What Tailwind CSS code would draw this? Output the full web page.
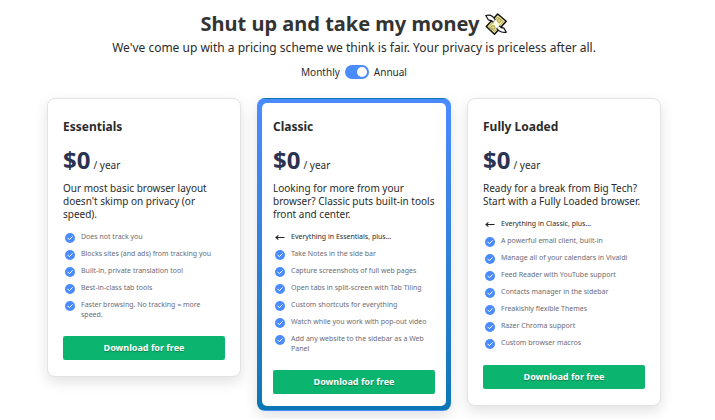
<!DOCTYPE html>
<html lang="en">
<head>
  <meta charset="UTF-8" />
  <meta name="viewport" content="width=device-width, initial-scale=1" />
  <title>Pricing</title>
  <script src="https://cdn.jsdelivr.net/npm/@tailwindcss/browser@4"></script>
</head>
<body class="bg-white font-['Noto_Sans','Open_Sans',sans-serif] text-[#2b2b2b]">
  <!-- shared icons -->
  <svg class="hidden">
    <symbol id="check" viewBox="0 0 10 10">
      <circle cx="5" cy="5" r="5" fill="#4a8cff" />
      <path d="M2.8 5.1 4.4 6.7 7.3 3.7" fill="none" stroke="#fff" stroke-width="1" stroke-linecap="round" stroke-linejoin="round" />
    </symbol>
    <symbol id="arrow" viewBox="0 0 10 10">
      <path d="M1 4.500H9.500M3.400 2.400 1 4.500 3.400 6.600" fill="none" stroke="#222" stroke-width="1.1" />
    </symbol>
  </svg>

  <main class="pt-2 pb-2 pl-[47px] pr-[54px]">
    <header class="flex flex-col items-center">
      <h1 class="flex items-center gap-[6px] text-[20px] leading-8 font-bold text-[#333]">
        Shut up and take my money
        <svg class="size-[22px]" viewBox="0 0 22 22" stroke-linejoin="round" aria-hidden="true">
          <path d="M1.300 13.500 12.700 1l8.500 7.300L9.500 21.200z" fill="#f3ea9c" stroke="#111" stroke-width="1.5" />
          <path d="M4 13.700 12.800 4l5.500 4.600L9.500 18.400z" fill="none" stroke="#8f8745" stroke-width=".7" />
          <circle cx="14" cy="7.500" r="1.900" fill="#e3d77c" stroke="#8f8745" stroke-width=".7" />
          <circle cx="8" cy="14.500" r="1.900" fill="#e3d77c" stroke="#8f8745" stroke-width=".7" />
          <path d="M8.500 9.500C7.500 7.500 5 7 3.300 6.800L.8 2.500C4.500 1.600 8.500 3 10.500 7.500z" fill="#fff" stroke="#111" stroke-width="1.200" />
          <path d="M14 12.500C15 14.500 17.500 15 19 15.200l2.300 4C18 20 13.500 18.500 11.500 15z" fill="#fff" stroke="#111" stroke-width="1.200" />
          <path d="m8 9.200 2.800-2.700 4 6.300-3.200 3z" fill="#fbfaf0" />
        </svg>
      </h1>
      <p class="text-[12px] leading-4">We've come up with a pricing scheme we think is fair. Your privacy is priceless after all.</p>
      <label class="mt-2 flex items-center gap-[5px] text-[10px] leading-4">
        Monthly
        <input type="checkbox" checked class="peer sr-only" />
        <span class="flex h-[14px] w-6 items-center rounded-full bg-gray-400 p-[2px] peer-checked:justify-end peer-checked:bg-[#4a8cff]">
          <span class="size-[10px] rounded-full bg-white"></span>
        </span>
        Annual
      </label>
    </header>

    <section class="mt-[18px] grid grid-cols-3 items-start gap-4">
      <article class="rounded-lg border border-[#e3e3e3] bg-white px-[15px] pt-4 pb-4 shadow-[0_5px_14px_rgba(0,0,0,0.12)]">
        <h2 class="text-[12px] leading-6 font-bold">Essentials</h2>
        <p class="mt-[5px] flex items-baseline gap-[3px]"><span class="text-[24px] leading-8 font-bold text-[#2b3252]">$0</span><span class="text-[10px] leading-4">/ year</span></p>
        <p class="mt-[6px] text-[10px] leading-[13px]">Our most basic browser layout doesn't skimp on privacy (or speed).</p>
        <ul class="mt-[11px] space-y-[6px] pr-1 pl-[2px] text-[7px] leading-[10px] text-[#6b6b75]">
          <li class="flex gap-[6px]"><svg class="mt-px size-[10px] shrink-0"><use href="#check" /></svg>Does not track you</li>
          <li class="flex gap-[6px]"><svg class="mt-px size-[10px] shrink-0"><use href="#check" /></svg>Blocks sites (and ads) from tracking you</li>
          <li class="flex gap-[6px]"><svg class="mt-px size-[10px] shrink-0"><use href="#check" /></svg>Built-in, private translation tool</li>
          <li class="flex gap-[6px]"><svg class="mt-px size-[10px] shrink-0"><use href="#check" /></svg>Best-in-class tab tools</li>
          <li class="flex gap-[6px]"><svg class="mt-px size-[10px] shrink-0"><use href="#check" /></svg>Faster browsing. No tracking = more speed.</li>
        </ul>
        <button class="mt-4 h-6 w-full rounded-xs bg-[#0cb56f] text-[9px] font-bold text-white text-shadow-[0_1px_1px_rgba(0,0,0,0.3)]">Download for free</button>
      </article>

      <article class="rounded-lg border border-transparent bg-linear-to-b from-[#4a8cff] to-[#0b76b4] p-1 shadow-[0_5px_14px_rgba(0,0,0,0.12)]">
        <div class="rounded-[5px] bg-white px-[11px] py-3">
          <h2 class="text-[12px] leading-6 font-bold">Classic</h2>
          <p class="mt-[5px] flex items-baseline gap-[3px]"><span class="text-[24px] leading-8 font-bold text-[#2b3252]">$0</span><span class="text-[10px] leading-4">/ year</span></p>
          <p class="mt-[6px] text-[10px] leading-[13px]">Looking for more from your browser? Classic puts built-in tools front and center.</p>
          <ul class="mt-[11px] space-y-[6px] pr-1 pl-[2px] text-[7px] leading-[10px] text-[#6b6b75]">
            <li class="flex gap-[6px] text-[#2b2b2b]"><svg class="mt-px size-[10px] shrink-0"><use href="#arrow" /></svg>Everything in Essentials, plus…</li>
            <li class="flex gap-[6px]"><svg class="mt-px size-[10px] shrink-0"><use href="#check" /></svg>Take Notes in the side bar</li>
            <li class="flex gap-[6px]"><svg class="mt-px size-[10px] shrink-0"><use href="#check" /></svg>Capture screenshots of full web pages</li>
            <li class="flex gap-[6px]"><svg class="mt-px size-[10px] shrink-0"><use href="#check" /></svg>Open tabs in split-screen with Tab Tiling</li>
            <li class="flex gap-[6px]"><svg class="mt-px size-[10px] shrink-0"><use href="#check" /></svg>Custom shortcuts for everything</li>
            <li class="flex gap-[6px]"><svg class="mt-px size-[10px] shrink-0"><use href="#check" /></svg>Watch while you work with pop-out video</li>
            <li class="flex gap-[6px]"><svg class="mt-px size-[10px] shrink-0"><use href="#check" /></svg>Add any website to the sidebar as a Web Panel</li>
          </ul>
          <button class="mt-4 h-6 w-full rounded-xs bg-[#0cb56f] text-[9px] font-bold text-white text-shadow-[0_1px_1px_rgba(0,0,0,0.3)]">Download for free</button>
        </div>
      </article>

      <article class="rounded-lg border border-[#e3e3e3] bg-white px-[15px] pt-4 pb-4 shadow-[0_5px_14px_rgba(0,0,0,0.12)]">
        <h2 class="text-[12px] leading-6 font-bold">Fully Loaded</h2>
        <p class="mt-[5px] flex items-baseline gap-[3px]"><span class="text-[24px] leading-8 font-bold text-[#2b3252]">$0</span><span class="text-[10px] leading-4">/ year</span></p>
        <p class="mt-[6px] text-[10px] leading-[13px]">Ready for a break from Big Tech? Start with a Fully Loaded browser.</p>
        <ul class="mt-[11px] space-y-[6px] pr-1 pl-[2px] text-[7px] leading-[10px] text-[#6b6b75]">
          <li class="flex gap-[6px] text-[#2b2b2b]"><svg class="mt-px size-[10px] shrink-0"><use href="#arrow" /></svg>Everything in Classic, plus…</li>
          <li class="flex gap-[6px]"><svg class="mt-px size-[10px] shrink-0"><use href="#check" /></svg>A powerful email client, built-in</li>
          <li class="flex gap-[6px]"><svg class="mt-px size-[10px] shrink-0"><use href="#check" /></svg>Manage all of your calendars in Vivaldi</li>
          <li class="flex gap-[6px]"><svg class="mt-px size-[10px] shrink-0"><use href="#check" /></svg>Feed Reader with YouTube support</li>
          <li class="flex gap-[6px]"><svg class="mt-px size-[10px] shrink-0"><use href="#check" /></svg>Contacts manager in the sidebar</li>
          <li class="flex gap-[6px]"><svg class="mt-px size-[10px] shrink-0"><use href="#check" /></svg>Freakishly flexible Themes</li>
          <li class="flex gap-[6px]"><svg class="mt-px size-[10px] shrink-0"><use href="#check" /></svg>Razer Chroma support</li>
          <li class="flex gap-[6px]"><svg class="mt-px size-[10px] shrink-0"><use href="#check" /></svg>Custom browser macros</li>
        </ul>
        <button class="mt-4 h-6 w-full rounded-xs bg-[#0cb56f] text-[9px] font-bold text-white text-shadow-[0_1px_1px_rgba(0,0,0,0.3)]">Download for free</button>
      </article>
    </section>
  </main>
</body>
</html>
